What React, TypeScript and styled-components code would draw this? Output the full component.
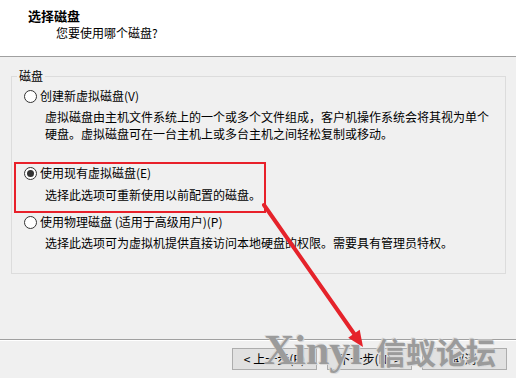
import React from "react";
import styled, { createGlobalStyle } from "styled-components";

const Global = createGlobalStyle`
  html, body { margin: 0; padding: 0; background: #f0f0f0; }
  body {
    font-family: "Noto Sans CJK SC", "Microsoft YaHei", sans-serif;
    font-size: 12px;
    color: #000;
  }
`;

const Window = styled.div`
  position: relative;
  width: 516px;
  height: 378px;
  overflow: hidden;
  background: #f0f0f0;
  display: flex;
  flex-direction: column;
`;

const Header = styled.header`
  box-sizing: border-box;
  height: 57px;
  background: #ffffff;
  border-bottom: 1px solid #a0a0a0;
  padding-top: 8px;
  display: flex;
  flex-direction: column;
  gap: 1px;
  flex: none;
`;

const Title = styled.div`
  padding-left: 28px;
  font-size: 13px;
  font-weight: 700;
  line-height: 16px;
`;

const Subtitle = styled.div`
  padding-left: 56px;
  font-size: 12px;
  line-height: 16px;
`;

const Group = styled.fieldset`
  box-sizing: border-box;
  margin: 11px 10px 0 11px;
  padding: 4px 0 0 0;
  min-width: 0;
  height: 206px;
  border: 1px solid #dcdcdc;
  display: flex;
  flex-direction: column;
  flex: none;
`;

const Legend = styled.legend`
  margin-left: 5px;
  padding: 0 2px;
  line-height: 16px;
  font-size: 12px;
`;

const Option = styled.div<{ $highlight?: boolean; $mt?: number }>`
  box-sizing: border-box;
  margin-top: ${(p) => p.$mt ?? 0}px;
  ${(p) =>
    p.$highlight
      ? `
    margin-left: 2px;
    width: 252px;
    border: 2px solid #e8202a;
    padding: 1px 0 8px 8px;
  `
      : `
    padding-left: 12px;
  `}
`;

const OptionRow = styled.label`
  display: flex;
  align-items: center;
  gap: 3px;
  line-height: 16px;
  height: 16px;
`;

const Radio = styled.span<{ $checked?: boolean }>`
  position: relative;
  box-sizing: border-box;
  width: 13px;
  height: 13px;
  border-radius: 50%;
  border: 1px solid #333333;
  background: #ffffff;
  flex: none;
  &::after {
    content: "";
    display: ${(p) => (p.$checked ? "block" : "none")};
    position: absolute;
    left: 2px;
    top: 2px;
    width: 7px;
    height: 7px;
    border-radius: 50%;
    background: #333333;
  }
`;

const Desc = styled.div<{ $mt: number }>`
  margin-top: ${(p) => p.$mt}px;
  padding-left: 21px;
  line-height: 17px;
  white-space: pre-line;
`;

const Spacer = styled.div`
  flex: 1;
`;

const Footer = styled.footer`
  border-top: 1px solid #a0a0a0;
  box-shadow: inset 0 1px 0 #ffffff;
  padding: 8px 9px 8px 0;
  display: flex;
  justify-content: flex-end;
  gap: 10px;
`;

const Button = styled.button`
  box-sizing: border-box;
  width: 85px;
  height: 22px;
  border: 1px solid #adadad;
  background: #e1e1e1;
  font-family: "Noto Sans CJK SC", "Microsoft YaHei", sans-serif;
  font-size: 12px;
  line-height: 18px;
  color: #000;
  padding: 0;
`;

const Overlay = styled.svg`
  position: absolute;
  left: 0;
  top: 0;
  pointer-events: none;
`;

const Watermark = styled.div`
  position: absolute;
  left: 264px;
  top: 329px;
  display: flex;
  align-items: baseline;
  gap: 14px;
  pointer-events: none;
  color: rgba(140, 140, 140, 0.82);
  text-shadow: 0 0 1px rgba(225, 225, 225, 0.95), 1px 1px 0 rgba(215, 215, 215, 0.85),
    -1px -1px 0 rgba(215, 215, 215, 0.85);
  white-space: nowrap;
`;

const WmLatin = styled.span`
  font-family: "Liberation Serif", serif;
  font-weight: 700;
  font-size: 42px;
  line-height: 42px;
`;

const WmCjk = styled.span`
  font-family: "Noto Sans CJK SC", sans-serif;
  font-weight: 700;
  font-size: 30px;
  line-height: 42px;
`;

export default function App() {
  return (
    <>
      <Global />
      <Window>
        <Header>
          <Title>选择磁盘</Title>
          <Subtitle>您要使用哪个磁盘?</Subtitle>
        </Header>
        <Group>
          <Legend>磁盘</Legend>
          <Option>
            <OptionRow>
              <Radio />
              创建新虚拟磁盘(V)
            </OptionRow>
            <Desc $mt={4}>
              {"虚拟磁盘由主机文件系统上的一个或多个文件组成，客户机操作系统会将其视为单个\n硬盘。虚拟磁盘可在一台主机上或多台主机之间轻松复制或移动。"}
            </Desc>
          </Option>
          <Option $highlight $mt={20}>
            <OptionRow>
              <Radio $checked />
              使用现有虚拟磁盘(E)
            </OptionRow>
            <Desc $mt={5}>选择此选项可重新使用以前配置的磁盘。</Desc>
          </Option>
          <Option $mt={1}>
            <OptionRow>
              <Radio />
              使用物理磁盘 (适用于高级用户)(P)
            </OptionRow>
            <Desc $mt={4}>选择此选项可为虚拟机提供直接访问本地硬盘的权限。需要具有管理员特权。</Desc>
          </Option>
        </Group>
        <Spacer />
        <Footer>
          <Button>&lt; 上一步(B)</Button>
          <Button>下一步(N) &gt;</Button>
          <Button>取消</Button>
        </Footer>
        <Watermark>
          <WmLatin>Xinyi</WmLatin>
          <WmCjk>信蚁论坛</WmCjk>
        </Watermark>
        <Overlay width={516} height={378} viewBox="0 0 516 378">
          <line x1={264} y1={205} x2={355} y2={335} stroke="#e5232b" strokeWidth={4} strokeLinecap="round" />
          <polygon points="363,347 348.2,337.8 359.7,329.8" fill="#e5232b" />
        </Overlay>
      </Window>
    </>
  );
}
